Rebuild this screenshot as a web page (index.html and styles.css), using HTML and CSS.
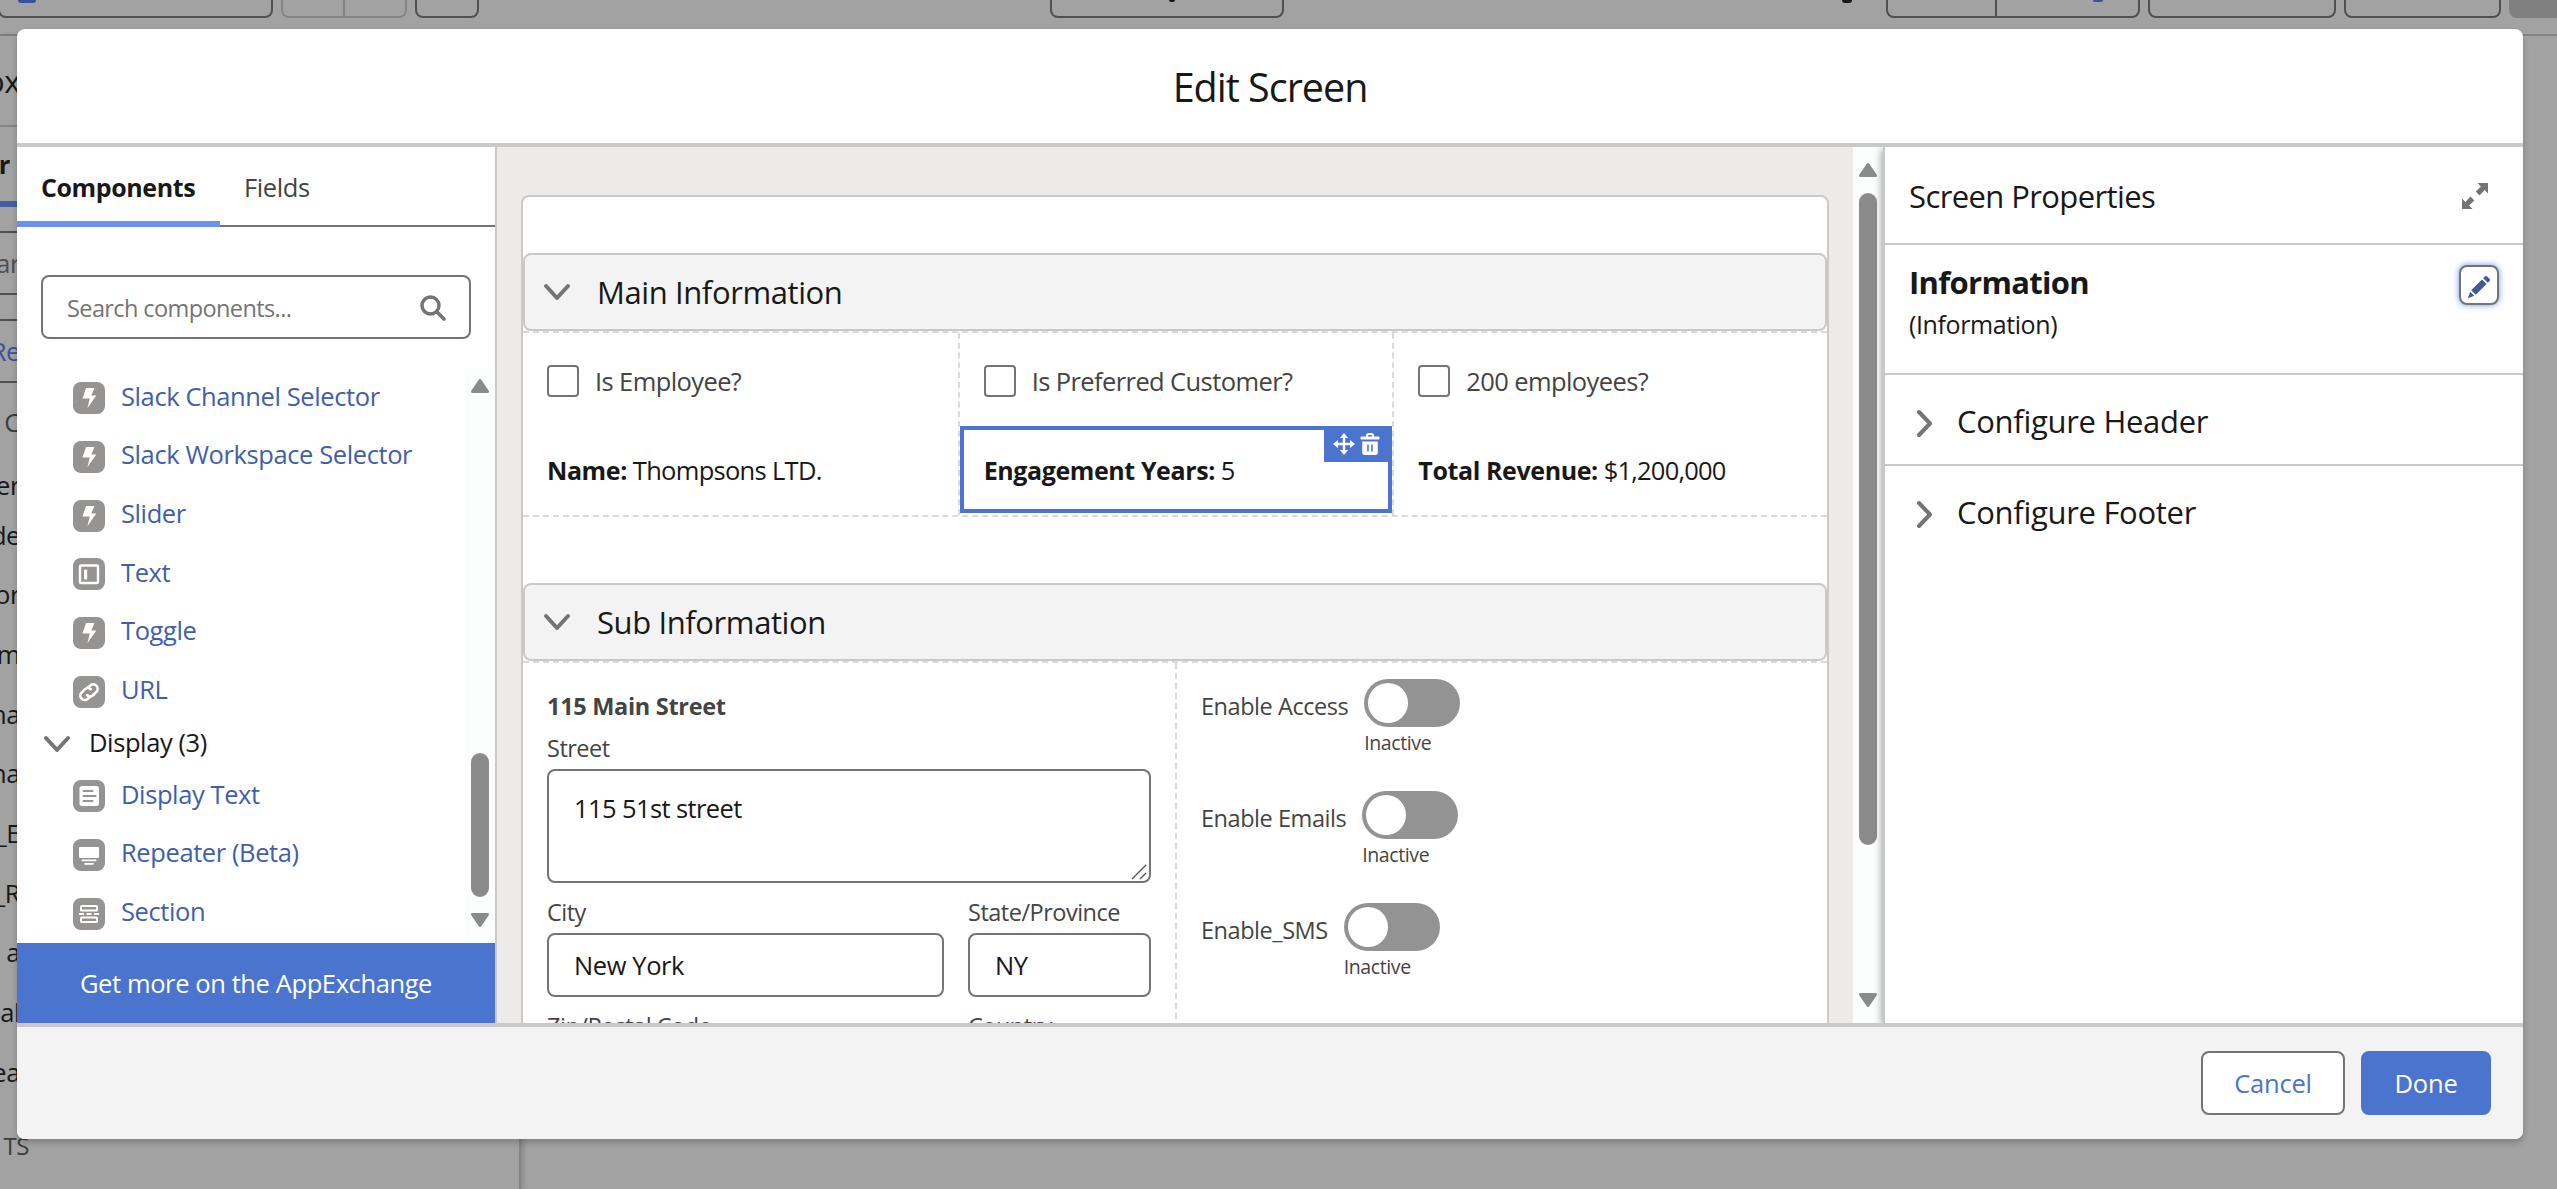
FILE: index.html
```html
<!DOCTYPE html>
<html lang="en">
<head>
  <meta charset="UTF-8">
  <title>Edit Screen</title>
  <link rel="stylesheet" href="styles.css">
</head>
<body>
  <svg class="sprite">
    <symbol id="bolt" viewBox="0 0 32 32"><path d="M13 6h8.500l-3.200 7.500h5L14.500 26l2.200-9.500H9.500z"/></symbol>
    <symbol id="text" viewBox="0 0 32 32"><rect x="7" y="7.500" width="18" height="17.500" rx="1" fill="none" stroke="#fff" stroke-width="2.400"/><rect x="11" y="11.500" width="3.200" height="10" rx="1"/></symbol>
    <symbol id="link" viewBox="0 0 32 32"><g fill="none" stroke="#fff" stroke-width="2.600" stroke-linecap="round"><path d="M14.800 11.600l2.600-2.200a4.400 4.400 0 0 1 6.200 6.200l-3.600 3.600a4.200 4.200 0 0 1-5.800 0"/><path d="M17.200 20.600l-2.600 2.400a4.400 4.400 0 0 1-6.200-6.200l3.600-3.600a4.200 4.200 0 0 1 5.800 0"/></g></symbol>
    <symbol id="display" viewBox="0 0 32 32"><rect x="6.500" y="6" width="19.500" height="20" rx="2.500"/><path d="M10.500 11h9M10.500 16h12M10.500 21h9" fill="none" stroke="#969492" stroke-width="2" stroke-linecap="round"/></symbol>
    <symbol id="repeater" viewBox="0 0 32 32"><rect x="6" y="8" width="20" height="11" rx="1"/><path d="M9.500 21.400h13M12 24.800h8" fill="none" stroke="#fff" stroke-width="1.800" stroke-linecap="round"/></symbol>
    <symbol id="section" viewBox="0 0 32 32"><g fill="none" stroke="#fff" stroke-width="2"><rect x="8" y="8" width="16" height="4.500" rx=".5"/><rect x="8" y="19.500" width="16" height="4.500" rx=".5"/><path d="M6 16h5M13.500 16h5M21 16h5"/></g></symbol>
    <symbol id="down" viewBox="0 0 28 28"><path d="M3 8l11 12L25 8" fill="none" stroke="#747474" stroke-width="4" stroke-linecap="round" stroke-linejoin="round"/></symbol>
    <symbol id="right" viewBox="0 0 28 28"><path d="M8 3l11 11.500L8 26" fill="none" stroke="#747474" stroke-width="4" stroke-linecap="round" stroke-linejoin="round"/></symbol>
    <symbol id="tri" viewBox="0 0 18 14"><path d="M9 1.500L16.500 12.500H1.500z" fill="#8b8b8b" stroke="#8b8b8b" stroke-width="3" stroke-linejoin="round"/></symbol>
  </svg>

  <!-- flow builder behind the modal -->
  <div class="builder">
    <div class="toolbar">
      <div class="tool-btn t1"><i class="dot"></i></div>
      <div class="tool-btn light t2"></div>
      <div class="tool-btn light t3"></div>
      <div class="tool-btn t4"></div>
      <div class="tool-btn t5"><i class="dot black"></i></div>
      <i class="dot g-tail"></i>
      <div class="tool-btn t6"></div>
      <div class="tool-btn t7"><i class="dot blue"></i></div>
      <div class="tool-btn t8"></div>
      <div class="tool-btn t9"></div>
      <div class="tool-btn fill"></div>
    </div>
    <div class="toolbox">
      <div class="tb-row tb-title">ox</div>
      <div class="tb-row tb-tab">er</div>
      <div class="tb-row tb-search">ar</div>
      <div class="tb-row tb-gap"></div>
      <div class="tb-row tb-link">Re</div>
      <div class="tb-row tb-group">C</div>
      <div class="tb-row tb-first">er</div>
      <div class="tb-row">de</div>
      <div class="tb-row">or</div>
      <div class="tb-row">m</div>
      <div class="tb-row">na</div>
      <div class="tb-row">na</div>
      <div class="tb-row">_E</div>
      <div class="tb-row">_R</div>
      <div class="tb-row">a</div>
      <div class="tb-row">al</div>
      <div class="tb-row">ea</div>
      <div class="tb-row tb-foot">TS</div>
    </div>
  </div>

  <div class="modal">
    <div class="modal-header">Edit Screen</div>

    <div class="modal-body">
      <div class="palette">
        <div class="tabs">
          <div class="tab active">Components</div>
          <div class="tab">Fields</div>
        </div>
        <div class="search">
          <span>Search components...</span>
          <svg width="28" height="28" viewBox="0 0 28 28"><circle cx="11.500" cy="11.500" r="8.500" fill="none" stroke="#747474" stroke-width="3.400"/><path d="M18 18l7 7" stroke="#747474" stroke-width="3.600" stroke-linecap="round"/></svg>
        </div>
        <div class="list-wrap">
          <div class="list">
            <div class="item"><svg class="ico"><use href="#bolt"/></svg><span>Slack Channel Selector</span></div>
            <div class="item"><svg class="ico"><use href="#bolt"/></svg><span>Slack Workspace Selector</span></div>
            <div class="item"><svg class="ico"><use href="#bolt"/></svg><span>Slider</span></div>
            <div class="item"><svg class="ico"><use href="#text"/></svg><span>Text</span></div>
            <div class="item"><svg class="ico"><use href="#bolt"/></svg><span>Toggle</span></div>
            <div class="item"><svg class="ico"><use href="#link"/></svg><span>URL</span></div>
            <div class="group"><svg class="chev"><use href="#down"/></svg><span>Display (3)</span></div>
            <div class="item"><svg class="ico"><use href="#display"/></svg><span>Display Text</span></div>
            <div class="item"><svg class="ico"><use href="#repeater"/></svg><span>Repeater (Beta)</span></div>
            <div class="item"><svg class="ico"><use href="#section"/></svg><span>Section</span></div>
          </div>
          <div class="scrollbar list-scroll">
            <svg class="arrow"><use href="#tri"/></svg>
            <div class="thumb"></div>
            <svg class="arrow flip"><use href="#tri"/></svg>
          </div>
        </div>
        <div class="exchange">Get more on the AppExchange</div>
      </div>

      <div class="stage">
        <div class="canvas">
          <div class="section-head"><svg class="chev"><use href="#down"/></svg><span>Main Information</span></div>
          <div class="cols three">
            <div class="col">
              <label class="check"><i></i>Is Employee?</label>
              <div class="display"><b>Name:</b> Thompsons LTD.</div>
            </div>
            <div class="col">
              <label class="check"><i></i>Is Preferred Customer?</label>
              <div class="display selected"><b>Engagement Years:</b> 5
                <div class="tools">
                  <svg width="22" height="22" viewBox="0 0 22 22"><path d="M11 3v16M3 11h16" stroke="#fff" stroke-width="2.400"/><path d="M11 0l4 5H7zM11 22l4-5H7zM0 11l5-4v8zM22 11l-5-4v8z" fill="#fff"/></svg>
                  <svg width="20" height="22" viewBox="0 0 20 22"><path d="M7 4V2.500A1.500 1.500 0 0 1 8.500 1h3A1.500 1.500 0 0 1 13 2.500V4" fill="none" stroke="#fff" stroke-width="2"/><rect x="0.500" y="3.500" width="19" height="3" rx="1" fill="#fff"/><path d="M2.200 8.500h15.600v11a2.500 2.500 0 0 1-2.500 2.500H4.700a2.500 2.500 0 0 1-2.500-2.500z" fill="#fff"/><path d="M8 11.500v7M12 11.500v7" stroke="#4b74ce" stroke-width="1.600"/></svg>
                </div>
              </div>
            </div>
            <div class="col">
              <label class="check"><i></i>200 employees?</label>
              <div class="display"><b>Total Revenue:</b> <span class="money">$1,200,000</span></div>
            </div>
          </div>

          <div class="section-head second"><svg class="chev"><use href="#down"/></svg><span>Sub Information</span></div>
          <div class="cols two">
            <div class="col address">
              <div class="legend">115 Main Street</div>
              <div class="label">Street</div>
              <div class="field area">115 51st street
                <svg class="grip" width="16" height="16" viewBox="0 0 16 16"><path d="M1 15L15 1M9 15l6-6" stroke="#555" stroke-width="1.400"/></svg>
              </div>
              <div class="pair">
                <div><div class="label">City</div><div class="field">New York</div></div>
                <div><div class="label">State/Province</div><div class="field">NY</div></div>
              </div>
              <div class="pair">
                <div><div class="label">Zip/Postal Code</div><div class="field"></div></div>
                <div><div class="label">Country</div><div class="field"></div></div>
              </div>
            </div>
            <div class="col">
              <div class="toggle-row"><span>Enable Access</span><div><div class="toggle"></div><small>Inactive</small></div></div>
              <div class="toggle-row"><span>Enable Emails</span><div><div class="toggle"></div><small>Inactive</small></div></div>
              <div class="toggle-row"><span>Enable_SMS</span><div><div class="toggle"></div><small>Inactive</small></div></div>
            </div>
          </div>
        </div>
      </div>
      <div class="scrollbar stage-scroll">
        <svg class="arrow"><use href="#tri"/></svg>
        <div class="thumb"></div>
        <svg class="arrow flip"><use href="#tri"/></svg>
      </div>

      <div class="props">
        <div class="props-head">
          <span>Screen Properties</span>
          <svg width="26" height="26" viewBox="0 0 26 26" fill="#747474"><path d="M15.500 0H26v10.500l-3.400-3.400-5 5.400-3.900-3.900 5.200-5.200z"/><path d="M10.500 26H0V15.500l3.400 3.400 5-5.400 3.900 3.900-5.200 5.200z"/></svg>
        </div>
        <div class="props-info">
          <div>
            <div class="info-label">Information</div>
            <div class="info-api">(Information)</div>
          </div>
          <button class="edit">
            <svg width="24" height="24" viewBox="0 0 24 24" fill="#3f5a9c"><path d="M4.200 15.200L15 4.400l4.600 4.600L8.800 19.800z"/><path d="M16.200 3.200l1.600-1.600c.8-.8 1.600-.8 2.400 0l2.200 2.200c.8.8.8 1.600 0 2.400l-1.600 1.600z"/><path d="M3.200 16.800l4 4-5.600 2.100c-.4.100-.6-.100-.5-.5z"/></svg>
          </button>
        </div>
        <div class="accordion"><svg class="chev"><use href="#right"/></svg><span>Configure Header</span></div>
        <div class="accordion last"><svg class="chev"><use href="#right"/></svg><span>Configure Footer</span></div>
      </div>
    </div>

    <div class="modal-footer">
      <button class="btn">Cancel</button>
      <button class="btn brand">Done</button>
    </div>
  </div>
</body>
</html>
```

FILE: styles.css
```css
* { box-sizing: border-box; }
body {
  margin: 0;
  height: 1189px;
  overflow: hidden;
  background: #a2a2a2;
  font-family: "Open Sans", sans-serif;
  font-size: 25.5px;
  letter-spacing: -0.4px;
  color: #181818;
}
b { font-size: 25px; letter-spacing: -0.4px; }
svg { display: block; flex: none; }
.sprite { position: absolute; width: 0; height: 0; }
.chev { width: 28px; height: 28px; }

/* builder page under the backdrop */
.builder { height: 1189px; }
.toolbar {
  display: flex;
  height: 36px;
  border-bottom: 2px solid #858585;
  overflow: hidden;
}
.tool-btn {
  flex: none;
  height: 18px;
  border: 2px solid #505050;
  border-top: 0;
  border-radius: 0 0 8px 8px;
}
.tool-btn.light { border-color: #858585; }
.t1 { width: 275px; margin-left: -2px; padding-left: 18px; }
.t2 { width: 62px; margin-left: 8px; border-bottom-right-radius: 0; border-right: 0; }
.t3 { width: 64px; border-bottom-left-radius: 0; }
.t4 { width: 64px; margin-left: 8px; }
.t5 { width: 234px; margin-left: 571px; padding-left: 117px; }
.t6 { width: 109px; margin-left: 34px; border-bottom-right-radius: 0; border-right: 0; }
.t7 { width: 145px; border-bottom-left-radius: 0; padding-left: 96px; }
.t8 { width: 188px; margin-left: 8px; }
.t9 { width: 157px; margin-left: 8px; }
.tool-btn.fill { width: 60px; margin-left: 8px; border: 0; background: #808080; }
.dot { display: block; flex: none; width: 18px; height: 3px; border-radius: 0 0 4px 4px; background: #3a529a; }
.dot.black { width: 6px; height: 2px; background: #181818; }
.dot.blue { width: 10px; height: 2px; }
.dot.g-tail { width: 10px; margin-left: 558px; background: #181818; }
.toolbox { width: 521px; height: 1153px; border-right: 2px solid #858585; box-shadow: 2px 0 5px rgba(0, 0, 0, 0.18); }
.tb-row {
  width: 20px;
  height: 59.700px;
  display: flex;
  align-items: center;
  justify-content: flex-end;
  white-space: nowrap;
}
.tb-title { height: 91px; border-bottom: 2px solid #858585; font-size: 31px; }
.tb-tab { width: 17px; height: 80px; padding-right: 7px; border-bottom: 6px solid #4460a4; font-weight: 700; }
.tb-search { height: 64px; margin-top: 24px; border: solid #505050; border-width: 2px 0; color: #505050; }
.tb-gap { height: 24px; }
.tb-link { height: 64px; border: solid #505050; border-width: 2px 0; color: #3a529a; }
.tb-group { height: 72px; padding-top: 6px; color: #3c3c3c; }
.tb-first { margin-bottom: -10px; }
.tb-foot { width: 29px; height: 88px; font-size: 24px; color: #3c3c3c; }

.modal {
  position: absolute;
  left: 17px;
  top: 29px;
  width: 2506px;
  height: 1110px;
  display: flex;
  flex-direction: column;
  background: #fff;
  border-radius: 8px;
  box-shadow: 0 4px 6px rgba(0, 0, 0, 0.2);
}
.modal-header {
  height: 118px;
  border-bottom: 4px solid #c9c9c9;
  font-size: 39.500px;
  letter-spacing: -1px;
  line-height: 116px;
  text-align: center;
}
.modal-body { display: flex; height: 876px; overflow: hidden; }
.modal-footer {
  display: flex;
  justify-content: flex-end;
  gap: 16px;
  height: 116px;
  padding: 24px 32px;
  border-top: 4px solid #c9c9c9;
  border-radius: 0 0 8px 8px;
  background: #f3f3f3;
}
.btn {
  width: 144px;
  height: 64px;
  padding: 0;
  border: 2px solid #747474;
  border-radius: 8px;
  background: #fff;
  color: #4b74ce;
  font: inherit;
  letter-spacing: -0.2px;
}
.btn.brand { width: 130px; border-color: #4b74ce; background: #4b74ce; color: #fff; }

/* left panel */
.palette { width: 480px; border-right: 2px solid #c9c9c9; }
.tabs { display: flex; height: 80px; border-bottom: 2px solid #747474; }
.tab { height: 80px; padding: 21px 24px 0; line-height: 39px; color: #444; }
.tab.active {
  width: 203px;
  border-bottom: 6px solid #6a91f0;
  font-size: 25px;
  font-weight: 700;
  color: #181818;
}
.search {
  display: flex;
  align-items: center;
  justify-content: space-between;
  height: 64px;
  margin: 48px 24px 30px;
  padding: 2px 22px 0 24px;
  border: 2px solid #747474;
  border-radius: 8px;
  font-size: 23.500px;
  letter-spacing: -0.6px;
  color: #747474;
}
.list-wrap { display: flex; height: 574px; }
.list { flex: 1; }
.item {
  display: flex;
  align-items: center;
  gap: 16px;
  height: 58.670px;
  padding-left: 56px;
  color: #3f5fab;
}
.item span { padding-bottom: 5px; }
.ico { width: 32px; height: 32px; border-radius: 8px; background: #969492; fill: #fff; }
.group { display: flex; align-items: center; gap: 18px; height: 46px; padding-left: 26px; }
.group span { padding-bottom: 4px; }
.scrollbar {
  display: flex;
  flex-direction: column;
  align-items: center;
  width: 30px;
  background: #fcfdfd;
}
.arrow { width: 18px; height: 14px; }
.flip { transform: rotate(180deg); }
.thumb { width: 18px; border-radius: 9px; background: #8b8b8b; }
.list-scroll { padding: 10px 0 16px; }
.list-scroll .thumb { height: 144px; margin: auto 0 16px; }
.exchange { height: 80px; background: #4b74ce; color: #fff; line-height: 81px; text-align: center; }

/* middle */
.stage { flex: 1; padding: 48px 24px 0; background: #ecebea; }
.canvas { height: 1000px; border: 2px solid #c9c9c9; border-radius: 8px; background: #fff; }
.section-head {
  display: flex;
  align-items: center;
  gap: 26px;
  height: 78px;
  margin-top: 56px;
  padding-left: 18px;
  border: 2px solid #c9c9c9;
  border-radius: 8px;
  background: #f3f3f3;
  font-size: 31px;
  letter-spacing: -0.4px;
}
.section-head.second { margin-top: 66px; }
.cols { display: grid; border: dashed #dadada; border-width: 2px 0; }
.three { grid-template-columns: repeat(3, 1fr); height: 186px; }
.two { grid-template-columns: 1fr 1fr; height: 500px; }
.col + .col { border-left: 2px dashed #dadada; }
.check {
  display: flex;
  align-items: center;
  gap: 16px;
  height: 93px;
  padding: 3px 0 0 24px;
  letter-spacing: -0.6px;
  color: #444;
}
.check i { width: 32px; height: 32px; border: 2px solid #747474; border-radius: 4px; background: #fff; }
.display { height: 87px; padding-left: 24px; line-height: 88px; letter-spacing: -0.7px; }
.money { letter-spacing: -0.8px; }
.selected { position: relative; border: 4px solid #4b74ce; padding-left: 20px; line-height: 80px; }
.tools {
  position: absolute;
  top: -4px;
  right: -4px;
  display: flex;
  align-items: center;
  gap: 5px;
  width: 68px;
  height: 36px;
  padding-left: 9px;
  background: #4b74ce;
}
.address { padding: 27px 24px 0; }
.legend { height: 32px; line-height: 32px; font-size: 23.500px; font-weight: 700; letter-spacing: -0.3px; color: #444; }
.label { height: 36px; margin: 11px 0 3px; line-height: 37px; font-size: 23.500px; letter-spacing: -0.5px; color: #444; }
.legend + .label { margin-top: 8px; }
.field {
  height: 64px;
  padding-left: 25px;
  border: 2px solid #747474;
  border-radius: 8px;
  background: #fff;
  line-height: 61px;
}
.area { position: relative; height: 114px; line-height: 74px; letter-spacing: -0.6px; }
.grip { position: absolute; right: 2px; bottom: 1px; }
.pair { display: grid; grid-template-columns: 397px 183px; gap: 24px; }
.toggle-row {
  display: flex;
  gap: 16px;
  height: 112px;
  padding: 16px 0 0 24px;
  font-size: 23.500px;
  letter-spacing: -0.450px;
  line-height: 54px;
  color: #444;
}
.toggle { width: 96px; height: 48px; padding: 4px; border-radius: 24px; background: #939393; }
.toggle::before { content: ""; display: block; width: 40px; height: 40px; border-radius: 50%; background: #fff; }
.toggle-row small { display: block; font-size: 19.500px; letter-spacing: -0.4px; line-height: 32px; }
.stage-scroll { padding: 16px 0; }
.stage-scroll .thumb { height: 652px; margin: 16px 0 auto; }

/* right panel */
.props {
  width: 640px;
  border-left: 2px solid #c9c9c9;
  background: #fff;
  box-shadow: -1px 2px 8px rgba(0, 0, 0, 0.4);
  font-size: 31px;
  letter-spacing: -0.6px;
}
.props-head {
  display: flex;
  align-items: center;
  justify-content: space-between;
  height: 98px;
  padding: 1px 35px 0 24px;
  border-bottom: 2px solid #c9c9c9;
}
.props-info { display: flex; justify-content: space-between; height: 130px; padding: 20px 24px 0; border-bottom: 2px solid #c9c9c9; }
.info-label { height: 34px; line-height: 34px; font-weight: 700; letter-spacing: -0.7px; }
.info-api { line-height: 51px; font-size: 25px; letter-spacing: -0.4px; }
.edit {
  display: grid;
  place-items: center;
  width: 40px;
  height: 40px;
  padding: 4px 0 0 0;
  border: 2px solid #747474;
  border-radius: 8px;
  background: #fff;
  box-shadow: 0 0 6px #6a91f0;
}
.accordion {
  display: flex;
  align-items: center;
  gap: 18px;
  height: 91px;
  padding: 7px 0 0 26px;
  border-bottom: 2px solid #c9c9c9;
  letter-spacing: -0.3px;
}
.accordion span { padding-bottom: 4px; }
.accordion.last { border-bottom-color: transparent; }
```
